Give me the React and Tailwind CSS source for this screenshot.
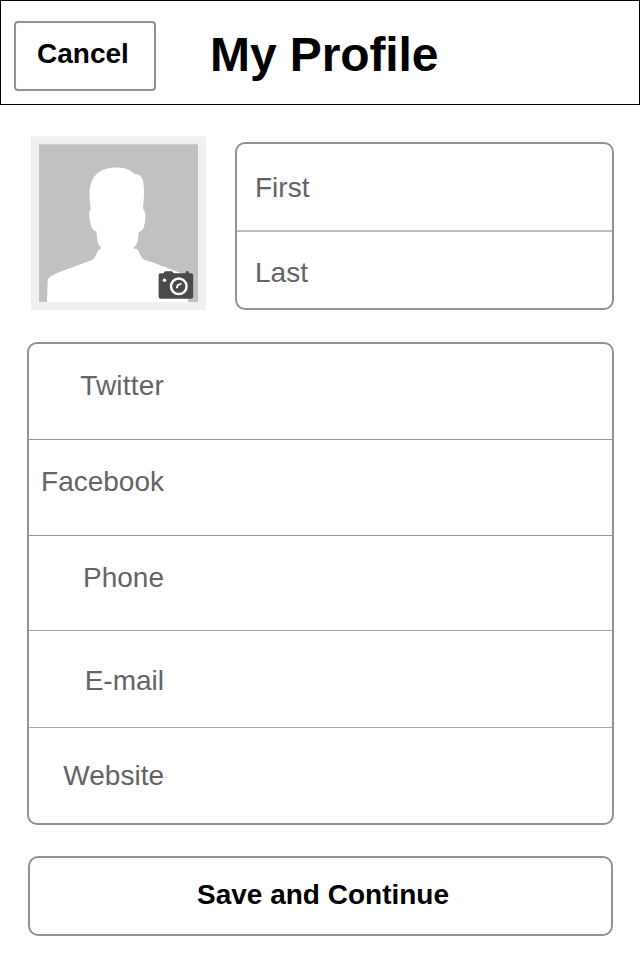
const fields = [
  { label: 'Twitter', row: 'h-[96px] pt-[28px] border-b border-[#97979a]', text: 'tracking-[0.2px]' },
  { label: 'Facebook', row: 'h-[96px] pt-[28px] border-b border-[#97979a]', text: '' },
  { label: 'Phone', row: 'h-[95px] pt-[28px] border-b border-[#a2a2a4]', text: '' },
  { label: 'E-mail', row: 'h-[97px] pt-[36px] border-b border-[#a8a8aa]', text: '' },
  { label: 'Website', row: 'grow pt-[34px]', text: '' },
];

function Avatar() {
  return (
    <svg className="block h-[174px] w-[175px]" viewBox="31 136 175 174">
      <rect x="31" y="136.4" width="175" height="173.6" fill="#f0f0f0" />
      <rect x="39" y="144.3" width="159" height="157.7" fill="#c1c1c1" />
      <path
        fill="#fff"
        d="M47 302L47.6 281.5C47.700 278.500 49.500 276.800 53 275L60 271.800L92 260Q94 259 95.200 256.500L98.300 250L101 248.600L100.800 247.500Q97.600 244.500 97.400 241L96.400 231.300C93 231 91.600 227.500 90.500 223.500C89.600 219 88.700 214.500 89.500 211.800L90.800 208.500C89.500 201 89 191 90.500 185C92.500 177 97 172.500 103 170C108 168 113 167.500 118.300 167.600C125.500 167.800 131 170.500 134.600 174.200C138 174 141.500 175 142.800 180C144.600 187 144 199 143 208.500L145 212C146 216 145.200 223 143.700 227.500C142.600 230.300 141 231.300 138.800 232L137.700 241Q137.300 244 133.200 248.300L137.300 249.300L141.500 257Q142.700 259.300 145 260L153 262.500L180 272.800L188 276V302Z"
      />
      <path
        fill="#4a4a4a"
        d="M160.500 273.300H163.300L165 271.200H172L173.700 273.300H185.700V271.700Q187.200 270.200 188.700 271.700V273.300H191Q193.200 273.300 193.200 275.500V296.500Q193.200 298.700 191 298.700H160.800Q158.600 298.700 158.600 296.500V275.200Q158.600 273.300 160.500 273.300Z"
      />
      <circle cx="164.500" cy="280.300" r="1.700" fill="#fff" />
      <circle cx="178.800" cy="286.300" r="7.800" fill="none" stroke="#fff" strokeWidth="2.500" />
      <path d="M176.900 288.300C176.900 285.500 178.600 284 181.400 283.900" fill="none" stroke="#fff" strokeWidth="1.900" />
    </svg>
  );
}

export default function App() {
  return (
    <main className="flex h-[980px] w-[640px] flex-col bg-white font-['Liberation_Sans',Arial,sans-serif] text-[28px] leading-[28px] text-[#646464]">
      <header className="flex h-[105px] shrink-0 items-start border border-black text-black">
        <button className="ml-[13px] mt-[20px] flex h-[70px] w-[142px] items-start justify-center rounded-[4px] border-2 border-[#939396] pr-[4px] pt-[17px] font-bold">
          Cancel
        </button>
        <h1 className="ml-[54px] mt-[30px] whitespace-nowrap text-[48px] font-bold leading-[48px] tracking-[-0.1px]">
          My Profile
        </h1>
      </header>

      <section className="ml-[31px] mt-[31px] flex items-start gap-[29px]">
        <Avatar />
        <div className="mt-[6px] flex h-[168px] w-[379px] flex-col rounded-[10px] border-2 border-[#939396]">
          <div className="h-[88px] border-b-2 border-[#bebebe] pl-[18px] pt-[30px]">First</div>
          <div className="pl-[18px] pt-[27px]">Last</div>
        </div>
      </section>

      <section className="ml-[27px] mt-[32px] flex h-[483px] w-[587px] shrink-0 flex-col rounded-[10px] border-2 border-[#939396]">
        {fields.map(({ label, row, text }) => (
          <div key={label} className={row}>
            <div className={`w-[135px] text-right ${text}`}>{label}</div>
          </div>
        ))}
      </section>

      <button className="ml-[28px] mt-[31px] flex h-[80px] w-[585px] shrink-0 items-start justify-center rounded-[10px] border-2 border-[#939396] pl-[5px] pt-[23px] font-bold text-black">
        Save and Continue
      </button>
    </main>
  );
}
